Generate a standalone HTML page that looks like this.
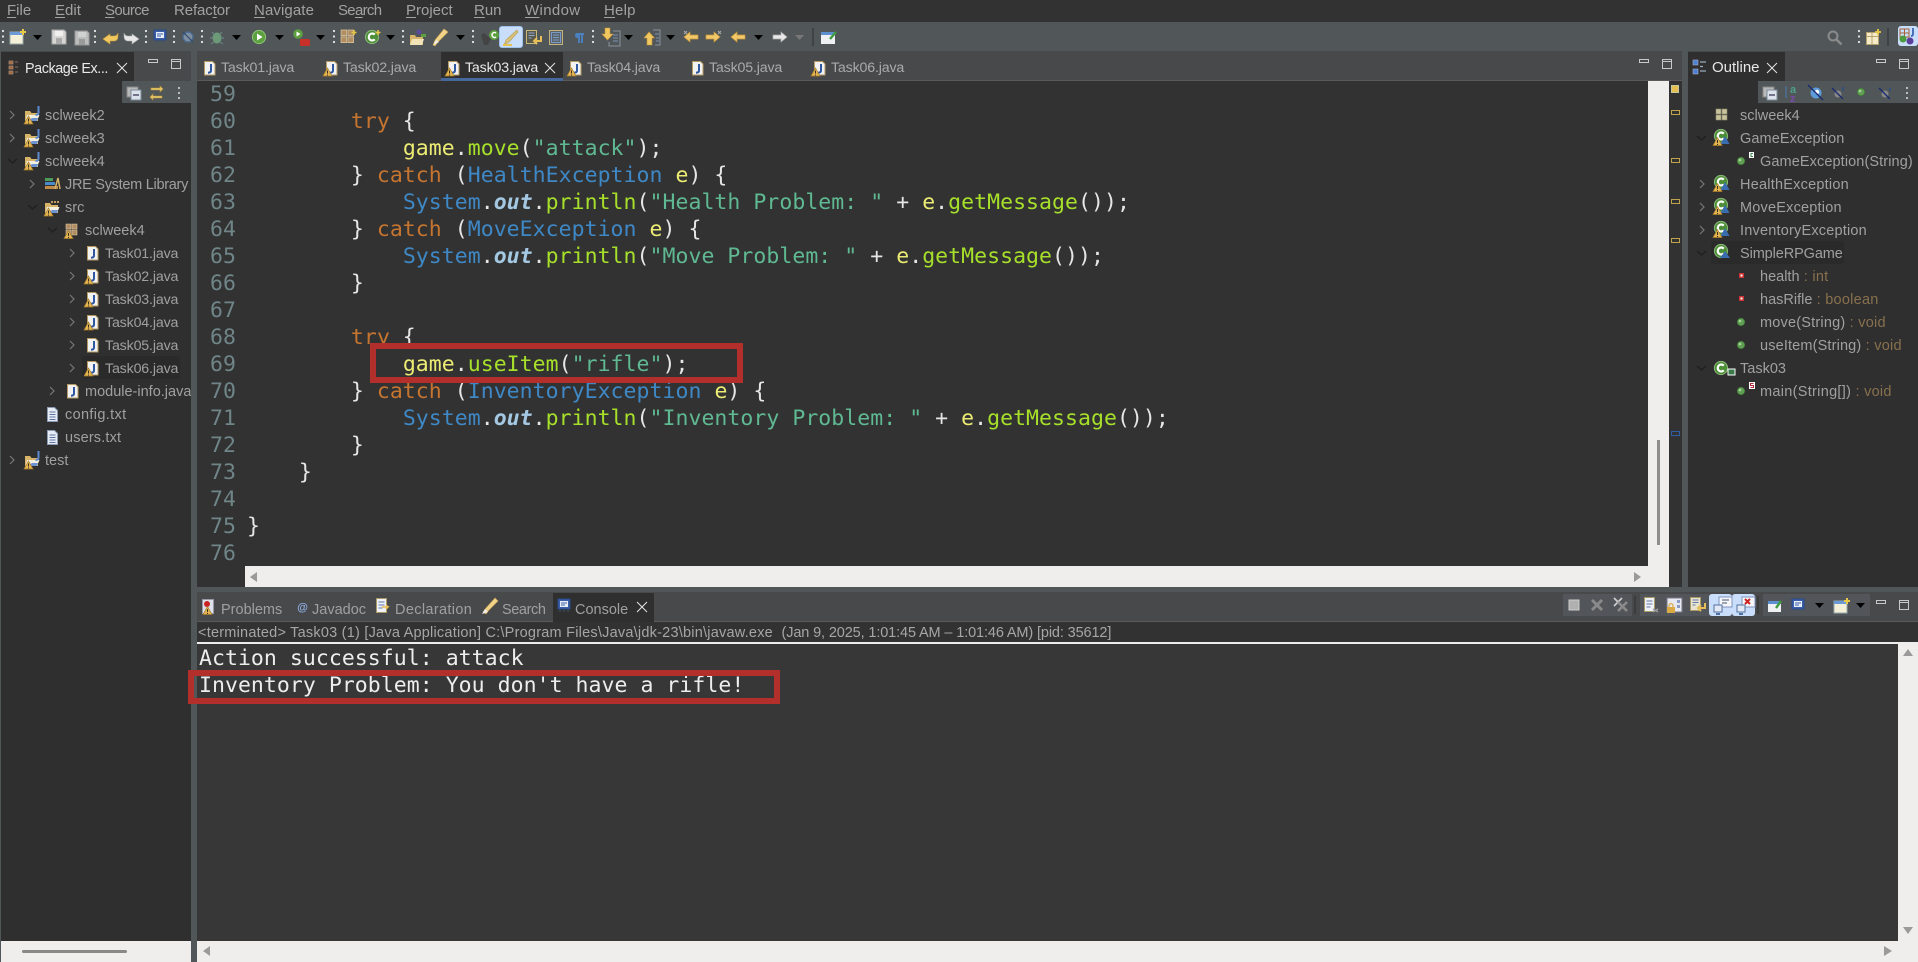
<!DOCTYPE html>
<html><head><meta charset="utf-8"><title>Eclipse</title>
<style>
html,body{margin:0;padding:0;width:1918px;height:962px;overflow:hidden;background:#515658}
body{position:relative;font-family:"Liberation Sans",sans-serif;font-size:14.5px;color:#a0a0a0}
.b{position:absolute}
.t{position:absolute;white-space:pre;line-height:20px;height:20px}
.m{font-size:15px;color:#a2a2a2;top:1px}
.u{text-decoration:underline;text-underline-offset:2px}
.j{font-size:14.2px;letter-spacing:-.15px}
.tab{top:58px;font-size:14.2px;letter-spacing:-.16px;color:#aaa}
.sel{color:#e8e8e8}
.ptab{top:600px;color:#a0a0a0}
.w{position:absolute;left:0;top:1px}
code,pre{font-family:"DejaVu Sans Mono","Liberation Mono",monospace}
pre{position:absolute;margin:0;font-size:21.5px;line-height:27.02px;letter-spacing:.04px;white-space:pre;color:#e6e6e6}
.k{color:#c5752f}.c{color:#3f88c6}.v{color:#ecec74}.f{color:#a7e02a}.s{color:#5fb992}.o{color:#a4c8e2;font-weight:bold;font-style:italic}
.ty{color:#88714e;letter-spacing:.25px}
svg{position:absolute;left:0;top:0}
</style></head><body>
<!-- bars -->
<div class="b" style="left:0;top:0;width:1918px;height:22px;background:#323232"></div>
<div class="b" style="left:0;top:22px;width:1918px;height:29px;background:#515658"></div>
<!-- left panel -->
<div class="b" style="left:1px;top:51px;width:190px;height:30px;background:#48494b"></div>
<div class="b" style="left:1px;top:52px;width:133px;height:29px;background:#2f2f2f"></div>
<div class="b" style="left:1px;top:81px;width:190px;height:860px;background:#2f2f2f"></div>
<div class="b" style="left:122px;top:81px;width:69px;height:22px;background:#515658"></div>
<div class="b" style="left:1px;top:941px;width:190px;height:21px;background:#efeeec"></div>
<div class="b" style="left:22px;top:950px;width:105px;height:3px;background:#888;border-radius:2px"></div>
<div class="b" style="left:82px;top:356px;width:98px;height:23px;background:#2a2a2a;border-radius:3px"></div>
<!-- editor -->
<div class="b" style="left:197px;top:51px;width:1485px;height:30px;background:#48494b"></div>
<div class="b" style="left:197px;top:80px;width:1485px;height:1px;background:#5a5a5a"></div>
<div class="b" style="left:441px;top:52px;width:122px;height:27px;background:#2f2f2f"></div>
<div class="b" style="left:441px;top:78px;width:122px;height:3px;background:#45699c"></div>
<div class="b" style="left:197px;top:81px;width:1485px;height:506px;background:#323232"></div>
<div class="b" style="left:1648px;top:81px;width:21px;height:506px;background:#efeeec"></div>
<div class="b" style="left:245px;top:566px;width:1424px;height:21px;background:#efeeec"></div>
<div class="b" style="left:1657px;top:440px;width:3px;height:105px;background:#8e8e8e"></div>
<div class="b" style="left:1671px;top:85px;width:6px;height:6px;background:#e5c04e;border:1px solid #c8c8a0"></div>
<div class="b" style="left:1671px;top:110px;width:7px;height:3px;border:1px solid #bfa44e"></div>
<div class="b" style="left:1671px;top:158px;width:7px;height:3px;border:1px solid #bfa44e"></div>
<div class="b" style="left:1671px;top:199px;width:7px;height:3px;border:1px solid #bfa44e"></div>
<div class="b" style="left:1671px;top:238px;width:7px;height:3px;border:1px solid #bfa44e"></div>
<div class="b" style="left:1671px;top:431px;width:7px;height:3px;border:1px solid #2f5ea8"></div>
<!-- outline -->
<div class="b" style="left:1688px;top:51px;width:230px;height:30px;background:#48494b"></div>
<div class="b" style="left:1688px;top:52px;width:97px;height:29px;background:#2f2f2f"></div>
<div class="b" style="left:1688px;top:81px;width:230px;height:506px;background:#2f2f2f"></div>
<div class="b" style="left:1758px;top:81px;width:160px;height:22px;background:#515658"></div>
<div class="b" style="left:1711px;top:241px;width:133px;height:23px;background:#2a2a2a;border-radius:3px"></div>
<!-- bottom panel -->
<div class="b" style="left:197px;top:592px;width:1721px;height:30px;background:#48494b"></div>
<div class="b" style="left:197px;top:621px;width:1721px;height:1px;background:#5a5a5a"></div>
<div class="b" style="left:553px;top:593px;width:101px;height:29px;background:#2f2f2f"></div>
<div class="b" style="left:1563px;top:594px;width:69px;height:22px;background:#52565a"></div>
<div class="b" style="left:1640px;top:594px;width:115px;height:22px;background:#52565a"></div>
<div class="b" style="left:1763px;top:594px;width:107px;height:22px;background:#52565a"></div>
<div class="b" style="left:1709px;top:594px;width:23px;height:22px;background:#c9defa;border-radius:3px"></div>
<div class="b" style="left:1732px;top:594px;width:23px;height:22px;background:#c9defa;border-radius:3px"></div>
<div class="b" style="left:197px;top:622px;width:1721px;height:20px;background:#323232"></div>
<div class="b" style="left:197px;top:642px;width:1721px;height:2px;background:#eee"></div>
<div class="b" style="left:197px;top:644px;width:1701px;height:297px;background:#373737"></div>
<div class="b" style="left:1898px;top:644px;width:20px;height:318px;background:#efeeec"></div>
<div class="b" style="left:197px;top:941px;width:1721px;height:21px;background:#efeeec"></div>
<!-- toolbar highlight buttons -->
<div class="b" style="left:499px;top:26px;width:22px;height:20px;background:#c9defa;border:1px solid #9fc2ee;border-radius:3px"></div>
<div class="b" style="left:1898px;top:26px;width:20px;height:20px;background:#c9defa;border-radius:3px"></div>

<!-- menu -->
<div class="t m" style="left:7px"><span class="u">F</span>ile</div>
<div class="t m" style="left:55px"><span class="u">E</span>dit</div>
<div class="t m" style="left:105px;letter-spacing:-.6px"><span class="u">S</span>ource</div>
<div class="t m" style="left:174px;letter-spacing:-.1px">Refac<span class="u">t</span>or</div>
<div class="t m" style="left:254px;letter-spacing:.1px"><span class="u">N</span>avigate</div>
<div class="t m" style="left:338px;letter-spacing:-.7px">Se<span class="u">a</span>rch</div>
<div class="t m" style="left:406px"><span class="u">P</span>roject</div>
<div class="t m" style="left:474px"><span class="u">R</span>un</div>
<div class="t m" style="left:525px;letter-spacing:.35px"><span class="u">W</span>indow</div>
<div class="t m" style="left:604px;letter-spacing:.2px"><span class="u">H</span>elp</div>

<!-- package explorer -->
<div class="t sel" style="left:25px;top:59px;font-size:14.4px;letter-spacing:-.45px">Package Ex...</div>
<div class="w">
<div class="t" style="left:45px;top:105px">sclweek2</div>
<div class="t" style="left:45px;top:128px">sclweek3</div>
<div class="t" style="left:45px;top:151px">sclweek4</div>
<div class="t" style="left:65px;top:174px;letter-spacing:-.28px">JRE System Library</div>
<div class="t" style="left:65px;top:197px">src</div>
<div class="t" style="left:85px;top:220px">sclweek4</div>
<div class="t j" style="left:105px;top:243px">Task01.java</div>
<div class="t j" style="left:105px;top:266px">Task02.java</div>
<div class="t j" style="left:105px;top:289px">Task03.java</div>
<div class="t j" style="left:105px;top:312px">Task04.java</div>
<div class="t j" style="left:105px;top:335px">Task05.java</div>
<div class="t j" style="left:105px;top:358px">Task06.java</div>
<div class="b" style="left:85px;top:381px;width:106px;height:20px;overflow:hidden"><div class="t" style="left:0;top:0">module-info.java</div></div>
<div class="t" style="left:65px;top:404px;letter-spacing:.35px">config.txt</div>
<div class="t" style="left:65px;top:427px;letter-spacing:.15px">users.txt</div>
<div class="t" style="left:45px;top:450px">test</div>
</div>

<!-- editor tabs -->
<div class="t tab" style="left:221px">Task01.java</div>
<div class="t tab" style="left:343px">Task02.java</div>
<div class="t tab sel" style="left:465px">Task03.java</div>
<div class="t tab" style="left:587px">Task04.java</div>
<div class="t tab" style="left:709px">Task05.java</div>
<div class="t tab" style="left:831px">Task06.java</div>

<!-- code -->
<pre style="left:210px;top:81px;color:#6f8588">59
60
61
62
63
64
65
66
67
68
69
70
71
72
73
74
75
76</pre>
<pre style="left:247px;top:81px">

        <span class="k">try</span> {
            <span class="v">game</span>.<span class="f">move</span>(<span class="s">"attack"</span>);
        } <span class="k">catch</span> (<span class="c">HealthException</span> <span class="v">e</span>) {
            <span class="c">System</span>.<span class="o">out</span>.<span class="f">println</span>(<span class="s">"Health Problem: "</span> + <span class="v">e</span>.<span class="f">getMessage</span>());
        } <span class="k">catch</span> (<span class="c">MoveException</span> <span class="v">e</span>) {
            <span class="c">System</span>.<span class="o">out</span>.<span class="f">println</span>(<span class="s">"Move Problem: "</span> + <span class="v">e</span>.<span class="f">getMessage</span>());
        }

        <span class="k">try</span> {
            <span class="v">game</span>.<span class="f">useItem</span>(<span class="s">"rifle"</span>);
        } <span class="k">catch</span> (<span class="c">InventoryException</span> <span class="v">e</span>) {
            <span class="c">System</span>.<span class="o">out</span>.<span class="f">println</span>(<span class="s">"Inventory Problem: "</span> + <span class="v">e</span>.<span class="f">getMessage</span>());
        }
    }

}
</pre>

<!-- outline -->
<div class="t sel" style="left:1712px;top:58px;font-size:15px">Outline</div>
<div class="w">
<div class="t" style="left:1740px;top:105px">sclweek4</div>
<div class="t" style="left:1740px;top:128px;letter-spacing:.1px">GameException</div>
<div class="t" style="left:1760px;top:151px;letter-spacing:.1px">GameException(String)</div>
<div class="t" style="left:1740px;top:174px;letter-spacing:.22px">HealthException</div>
<div class="t" style="left:1740px;top:197px;letter-spacing:.2px">MoveException</div>
<div class="t" style="left:1740px;top:220px;letter-spacing:.2px">InventoryException</div>
<div class="t" style="left:1740px;top:243px;letter-spacing:-.1px">SimpleRPGame</div>
<div class="t" style="left:1760px;top:266px">health<span class="ty"> : int</span></div>
<div class="t" style="left:1760px;top:289px">hasRifle<span class="ty"> : boolean</span></div>
<div class="t" style="left:1760px;top:312px;letter-spacing:.2px">move(String)<span class="ty"> : void</span></div>
<div class="t" style="left:1760px;top:335px;letter-spacing:.15px">useItem(String)<span class="ty"> : void</span></div>
<div class="t" style="top:358px;left:1740px">Task03</div>
<div class="t" style="left:1760px;top:381px;letter-spacing:.3px">main(String[])<span class="ty"> : void</span></div>
</div>

<!-- bottom tabs -->
<div class="t ptab" style="left:221px">Problems</div>
<div class="t ptab" style="left:312px">Javadoc</div>
<div class="t ptab" style="left:395px;letter-spacing:.35px">Declaration</div>
<div class="t ptab" style="left:502px;letter-spacing:-.4px">Search</div>
<div class="t ptab sel" style="left:575px">Console</div>
<div class="t" style="left:198px;top:623px;font-size:14.5px;letter-spacing:.225px;color:#a6a6a6">&lt;terminated&gt; Task03 (1) [Java Application] C:\Program Files\Java\jdk-23\bin\javaw.exe  <span style="letter-spacing:-.125px">(Jan 9, 2025, 1:01:45 AM – 1:01:46 AM) [pid: 35612]</span></div>
<pre style="left:199px;top:645px;color:#ededed">Action successful: attack
Inventory Problem: You don't have a rifle!</pre>

<!-- icons -->
<svg width="1918" height="962" viewBox="0 0 1918 962">
<defs>
<g id="warn"><path d="M4.5 .5L9 8.5H0Z" fill="#e3b552" stroke="#a67c2a" stroke-width=".7"/><path d="M4.5 3v3M4.5 7v1" stroke="#3a3020" stroke-width="1"/></g>
<g id="fold"><path d="M1 5h5l1.5 2H14v8H1z" fill="#d8b468"/><path d="M3 9h12.5l-2.5 6H1.5z" fill="#f3efe0"/><path d="M8 12h6l-1 3H4z" fill="#6c93d2"/></g>
<g id="prj"><use href="#fold"/><path d="M14.5 0v6.5q0 2.5-3 2.5" stroke="#5e8ad0" stroke-width="2" fill="none"/><use href="#warn" x="0" y="9.5"/></g>
<g id="prj0"><use href="#fold"/><use href="#warn" x="0" y="9.5"/><path d="M7 3h2v2H7zM10 3h2v2h-2zM13 3h2v2h-2z" fill="#c09a60"/></g>
<g id="jf"><path d="M.5.5h8l2.5 2.5v11H.5z" fill="#f2f2f2" stroke="#b49a62"/><path d="M7 3v6.5q0 2.2-3 2.2" stroke="#2f56a0" stroke-width="2" fill="none"/></g>
<g id="jw"><use href="#jf" x="3"/><use href="#warn" y="6.5"/></g>
<g id="pkg"><path d="M0 0h5v5H0zM6 0h5v5H6zM0 6h5v5H0zM6 6h5v5H6z" fill="#b08d62" stroke="#e0c8a0" stroke-width=".6"/></g>
<g id="txt"><path d="M.5.5h7l3 3v11H.5z" fill="#e6ecf6" stroke="#8c9ab4"/><path d="M2.5 5h6M2.5 7.5h6M2.5 10h6M2.5 12.5h6" stroke="#6072a0"/></g>
<g id="cl"><circle cx="7" cy="7" r="6.6" fill="#4d8f38" stroke="#8ab67a"/><path d="M9.8 4.6A3.5 3.5 0 1 0 9.8 9.4" stroke="#fff" stroke-width="2.2" fill="none"/></g>
<g id="clw"><use href="#cl" x="1"/><path d="M12 7l4.500 8H7.500z" fill="#3a6cb0"/><use href="#warn" x="0" y="8"/></g>
<g id="dot"><circle cx="4" cy="4" r="3.8" fill="#5f9f52" stroke="#3c6e36" stroke-width=".6"/><circle cx="3" cy="3" r="1.300" fill="#a9d49a"/></g>
<g id="sq"><rect width="5" height="5" fill="#c33"/><rect x="1.500" y="1.500" width="2" height="2" fill="#fff"/></g>
<g id="nw"><rect x="1" y="3" width="13" height="12" fill="#f5f0d8" stroke="#9aa" /><rect x="1" y="3" width="13" height="3" fill="#6d9bd8"/><path d="M14 0v6M11 3h6" stroke="#e8c848" stroke-width="2"/></g>
<g id="sv"><path d="M1 1h12l2 2v12H1z" fill="#d6d6d4" stroke="#aaa"/><rect x="4" y="2" width="8" height="5" fill="#f0f0f0"/><rect x="5" y="9" width="6" height="6" fill="#aaa"/></g>
<g id="ba"><path d="M8 5L1 10l7 5v-3h4q4 0 4-5V4q-1 3-4 3H8z" fill="#f0c860" stroke="#c79b3e" stroke-width=".6"/></g>
<g id="la"><path d="M6 2L0 7l6 5V9h8V5H6z" fill="#f3c868" stroke="#c6983e" stroke-width=".7"/></g>
<g id="ra"><path d="M8 2l6 5-6 5V9H0V5h8z" fill="#f3c868" stroke="#c6983e" stroke-width=".7"/></g>
<g id="cr"><path d="M0 0h9l-4.500 5z" fill="#000"/></g>
<g id="gr"><circle cx="1" cy="1" r="1" fill="#ddd"/><circle cx="1" cy="6" r="1" fill="#ddd"/><circle cx="1" cy="11" r="1" fill="#ddd"/></g>
<g id="hd"><circle cx="1" cy="1" r="1.100" fill="#e8e8e8"/><circle cx="1" cy="6.500" r="1.100" fill="#e8e8e8"/><circle cx="1" cy="12" r="1.100" fill="#e8e8e8"/></g>
<g id="mn"><rect x=".5" y=".5" width="9" height="3" fill="none" stroke="#c8c8c8"/></g>
<g id="mx"><rect x=".5" y=".5" width="9" height="9" fill="none" stroke="#c8c8c8"/><path d="M0 2.500h10" stroke="#c8c8c8"/></g>
<g id="xx"><path d="M0 0l10 10M10 0L0 10" stroke="#e6e6e6" stroke-width="1"/></g>
<g id="ch"><path d="M0 0l4 4-4 4" stroke="#777" stroke-width="1.200" fill="none"/></g>
<g id="dn"><path d="M0 0l4.500 4 4.500-4" stroke="#1f1f1f" stroke-width="1.300" fill="none"/></g>
<g id="mon"><rect x="0" y="0" width="12" height="10" fill="#3a5fa8" stroke="#2a4a88"/><rect x="2" y="2" width="8" height="6" fill="#e8eef8"/><path d="M3 4h6M3 6h4" stroke="#3a5fa8"/><path d="M1 12h2M5 12h2M9 12h2" stroke="#456"/></g>
<g id="con2"><rect x="6" y="0" width="13" height="10" fill="#f4f6fb" stroke="#7f94bd"/><rect x="1" y="8" width="8" height="7" fill="#e4eaf5" stroke="#4e6f9f"/><path d="M3 17h4" stroke="#4e6f9f" stroke-width="2"/></g>
<g id="doc"><path d="M.5.5h10v14H.5z" fill="#eef1f8" stroke="#a99a66"/><path d="M2.500 4h6M2.500 7h6M2.500 10h4" stroke="#6278a8"/></g>
</defs>

<!-- main toolbar -->
<use href="#hd" x="2" y="30"/>
<use href="#nw" x="9" y="29"/><use href="#cr" x="33" y="35"/>
<use href="#sv" x="51" y="29"/><g opacity=".8"><use href="#sv" x="74" y="30"/></g>
<use href="#hd" x="94" y="30"/>
<use href="#ba" x="102" y="29"/><g transform="translate(140,29) scale(-1,1)"><path d="M8 5L1 10l7 5v-3h4q4 0 4-5V4q-1 3-4 3H8z" fill="#e6e6e6" stroke="#aaa" stroke-width=".6"/></g>
<use href="#hd" x="145" y="30"/>
<use href="#mon" x="154" y="30"/>
<use href="#hd" x="173" y="30"/>
<g transform="translate(182,31)"><circle cx="6" cy="6" r="5" fill="#7f8f9f" stroke="#4a6a90" stroke-width="1.400"/><path d="M1 1l10 10" stroke="#2f4a70" stroke-width="1.200"/></g>
<use href="#hd" x="201" y="30"/>
<g transform="translate(210,29)"><ellipse cx="7" cy="9" rx="4.500" ry="5.500" fill="#6c9a78"/><path d="M2 3l3 3M12 3l-3 3M0 9h3M11 9h3M1 15l3-2M13 15l-3-2" stroke="#6a8a8a"/></g><use href="#cr" x="232" y="35"/>
<g transform="translate(252,30)"><circle cx="7" cy="7" r="6.600" fill="#5da03f" stroke="#8fc47a"/><path d="M5 3.500l5.500 3.500L5 10.500z" fill="#fff"/></g><use href="#cr" x="275" y="35"/>
<g transform="translate(293,29)"><circle cx="5" cy="5" r="4.800" fill="#5da03f"/><path d="M3.500 2.500l4 2.500-4 2.500z" fill="#fff"/><rect x="7" y="10" width="10" height="7" fill="#c8302a" rx="1"/></g><use href="#cr" x="316" y="35"/>
<use href="#hd" x="333" y="30"/>
<g transform="translate(341,30)"><g transform="scale(1.150)"><use href="#pkg"/></g><path d="M13 0v5M10.500 2.500h5" stroke="#e8c848" stroke-width="1.600"/></g>
<g transform="translate(365,30)"><use href="#cl"/><path d="M13 0v5M10.500 2.500h5" stroke="#e8c848" stroke-width="1.600"/></g><use href="#cr" x="386" y="35"/>
<use href="#hd" x="402" y="30"/>
<g transform="translate(409,29)"><path d="M1 6h5l1 2h7v8H1z" fill="#d8b468"/><path d="M3 10h12l-2 6H1z" fill="#f0e3b8"/><circle cx="10" cy="3" r="2.500" fill="#5a4a9a"/><rect x="12" y="5" width="5" height="3" fill="#5da03f"/></g>
<g transform="translate(432,29)"><path d="M12 0l4 3-9 9-4 5-2-1 2-5z" fill="#f2d38c" stroke="#c7a64e" stroke-width=".6"/><path d="M1 16l3-5 3 2z" fill="#eee"/></g><use href="#cr" x="456" y="35"/>
<use href="#hd" x="472" y="30"/>
<g transform="translate(481,29)"><path d="M0 6l3-2 7 6-3 6H3z" fill="#444"/><circle cx="13" cy="6" r="5" fill="#5da03f"/><path d="M15 4a2.500 2.500 0 1 0 0 4" stroke="#fff" fill="none" stroke-width="1.500"/></g>
<g transform="translate(502,29)"><path d="M15 1l1 2-9 10-5 3 2-5z" fill="#d9c27a" stroke="#b49a50" stroke-width=".6"/><path d="M1 16h9" stroke="#e5c34e" stroke-width="2"/></g>
<g transform="translate(526,30)"><path d="M.5 .5h10v13H.5z" fill="#5a5a4a" stroke="#c9ba7a"/><path d="M2.500 3h6M2.500 5.500h6M2.500 8h3" stroke="#8ea6d0"/><path d="M15 6v5H8m3-3l-3 3 3 3" stroke="#e7be58" stroke-width="2" fill="none"/></g>
<g transform="translate(549,30)"><rect x=".5" y=".5" width="13" height="14" fill="#5a6468" stroke="#c7b47a"/><rect x="2.500" y="2.500" width="9" height="10" fill="none" stroke="#7a9ac8"/><path d="M4 5h6M4 7.500h6M4 10h6" stroke="#7a9ac8"/></g>
<path d="M577 33h7v2h-1v8h-2v-8h-1v8h-2v-5q-3 0-3-2.500t2-2.500z" fill="#4a80c0"/>
<use href="#hd" x="592" y="30"/>
<g transform="translate(601,28)"><path d="M4 0h5v6h3l-5.500 6L1 6h3z" fill="#f1c860" stroke="#c2953c" stroke-width=".6"/><path d="M12 3h7v15H8v-4" fill="none" stroke="#8b93a0"/><path d="M12 7h5M12 10h5M12 13h5" stroke="#7a93b8"/></g><use href="#cr" x="624" y="35"/>
<g transform="translate(643,28)"><path d="M6 4l5.500 6H9v7H4v-7H1z" fill="#f1c860" stroke="#c2953c" stroke-width=".6"/><path d="M10 2h7v15h-5" fill="none" stroke="#8b93a0"/><path d="M12 6h4M13 10h3M13 13h3" stroke="#7a93b8"/></g><use href="#cr" x="666" y="35"/>
<g transform="translate(684,30)"><use href="#la"/><path d="M0 1l3 3M3 1L0 4" stroke="#aaa"/></g>
<g transform="translate(706,30)"><use href="#ra"/><path d="M12 1l3 3M15 1l-3 3" stroke="#aaa"/></g>
<use href="#la" x="731" y="30"/><use href="#cr" x="754" y="35"/>
<g transform="translate(773,30)"><path d="M8 2l6 5-6 5V9H0V5h8z" fill="#e8e8e8" stroke="#aaa" stroke-width=".7"/></g>
<path d="M795 35h9l-4.500 5z" fill="#777"/>
<path d="M813 28v18" stroke="#2e2e2e" stroke-width="1"/>
<g transform="translate(821,30)"><rect x="0" y="2" width="14" height="12" fill="#eef0f4"/><rect x="0" y="2" width="14" height="3" fill="#5c8fd0"/><path d="M9 9l6-7" stroke="#3d9a3d" stroke-width="2.400"/></g>
<g transform="translate(1827,30)"><circle cx="6" cy="6" r="4.500" fill="none" stroke="#8b8b8b" stroke-width="2"/><path d="M9.500 9.500l5 5" stroke="#8b8b8b" stroke-width="2.400"/></g>
<use href="#hd" x="1858" y="30"/>
<g transform="translate(1866,29)"><rect x=".5" y="3.500" width="12" height="12" fill="#f6ecc8" stroke="#b5a070"/><path d="M.5 7.500h12M6 3.500v12" stroke="#b5a070"/><path d="M12 0v6M9 3h6" stroke="#e8c848" stroke-width="1.800"/></g>
<path d="M1888 28v18" stroke="#2e2e2e"/>
<g transform="translate(1899,28)"><path d="M1 1h9v8H1zM1 5h9M5.500 1v8" fill="none" stroke="#a5603a"/><path d="M14 0v6q0 2-2 2" stroke="#3a66b4" stroke-width="1.800" fill="none"/><circle cx="4" cy="11" r="3.500" fill="#4c9c3f"/><circle cx="11" cy="13" r="3.500" fill="#5b3e9c"/></g>

<!-- view controls -->
<use href="#mn" x="148" y="59"/><use href="#mx" x="171" y="59"/>
<use href="#mn" x="1639" y="59"/><use href="#mx" x="1662" y="59"/>
<use href="#mn" x="1876" y="59"/><use href="#mx" x="1899" y="59"/>
<use href="#mn" x="1876" y="600"/><use href="#mx" x="1899" y="600"/>
<use href="#xx" x="117" y="63"/><use href="#xx" x="545" y="63"/><use href="#xx" x="1767" y="63"/><use href="#xx" x="637" y="602"/>

<!-- package explorer tab icon + toolbar -->
<path d="M9 61h4v3H9zM9 66h4v3H9zM9 71h4v3H9zM15 62h3M15 67h3M15 72h3" fill="#a06a3a" stroke="#a87" stroke-width=".7"/>
<path d="M127 87h11v10h-11z" fill="#b8b8b8" stroke="#888"/><rect x="131" y="90" width="10" height="10" fill="#dce2ec" stroke="#7a8a9a"/><path d="M133 95h6" stroke="#446" stroke-width="1.400"/>
<path d="M151 88h9v-2l3 3-3 3v-2h-9zM162 96h-9v-2l-3 3 3 3v-2h9z" fill="#e9c668" stroke="#b89440" stroke-width=".6"/>
<use href="#gr" x="178" y="87"/>

<!-- explorer tree -->
<use href="#ch" x="10" y="111"/><use href="#prj" x="24" y="106"/>
<use href="#ch" x="10" y="134"/><use href="#prj" x="24" y="129"/>
<g transform="translate(8 159)"><use href="#dn"/></g><use href="#prj" x="24" y="152"/>
<use href="#ch" x="30" y="180"/>
<g transform="translate(45,177)"><rect y="9" width="13" height="3" fill="#c08a4a"/><rect y="5" width="10" height="3" fill="#4a8ac8"/><rect y="1" width="8" height="3" fill="#4d9c5a"/><path d="M10 12l3-11 2 11" stroke="#d8b468" stroke-width="1.500" fill="none"/></g>
<g transform="translate(28 205)"><use href="#dn"/></g><use href="#prj0" x="44" y="198"/>
<g transform="translate(48 228)"><use href="#dn"/></g><g transform="translate(66,224)"><use href="#pkg"/></g><use href="#warn" x="64" y="230"/>
<use href="#ch" x="70" y="249"/><use href="#jf" x="87" y="246"/>
<use href="#ch" x="70" y="272"/><use href="#jw" x="84" y="269"/>
<use href="#ch" x="70" y="295"/><use href="#jw" x="84" y="292"/>
<use href="#ch" x="70" y="318"/><use href="#jw" x="84" y="315"/>
<use href="#ch" x="70" y="341"/><use href="#jf" x="87" y="338"/>
<use href="#ch" x="70" y="364"/><use href="#jw" x="84" y="361"/>
<use href="#ch" x="50" y="387"/><use href="#jf" x="67" y="384"/>
<use href="#txt" x="47" y="407"/>
<use href="#txt" x="47" y="430"/>
<use href="#ch" x="10" y="456"/><use href="#prj" x="24" y="451"/>

<!-- editor tabs -->
<use href="#jf" x="204" y="61"/>
<use href="#jw" x="323" y="61"/>
<use href="#jw" x="445" y="61"/>
<use href="#jw" x="567" y="61"/>
<use href="#jf" x="692" y="61"/>
<use href="#jw" x="811" y="61"/>

<!-- scroll arrows -->
<path d="M257 572v10l-7-5z" fill="#9a9a9a"/>
<path d="M1634 572v10l7-5z" fill="#9a9a9a"/>
<path d="M210 946v10l-7-5z" fill="#9a9a9a"/>
<path d="M1884 946v10l8-5z" fill="#9a9a9a"/>
<path d="M1903 656h10l-5-7z" fill="#9a9a9a"/>
<path d="M1903 927h10l-5 7z" fill="#9a9a9a"/>

<!-- outline icons -->
<g transform="translate(1693,60)"><rect width="5" height="5" fill="#4c80d0" stroke="#aac" stroke-width=".6"/><rect y="9" width="5" height="5" fill="#4c80d0" stroke="#aac" stroke-width=".6"/><path d="M7 2h6M7 6.500h3M7 11h6" stroke="#9ab" stroke-width="1.200"/></g>
<g transform="translate(1763,87)"><rect width="11" height="10" fill="#b8b8b8" stroke="#888"/><rect x="4" y="3" width="10" height="10" fill="#dce2ec" stroke="#7a8a9a"/><path d="M6 8h6" stroke="#446" stroke-width="1.400"/></g>
<path d="M1786 86v12" stroke="#4a7cb4"/><text x="1790" y="93" font-size="11" font-weight="bold" fill="#4fa08a" font-family="Liberation Sans">a</text><text x="1790" y="102" font-size="11" font-weight="bold" fill="#7a4aa8" font-family="Liberation Sans">z</text>
<g transform="translate(1810,87)"><circle cx="6" cy="6" r="5.500" fill="#5d9cd8"/><circle cx="7" cy="5" r="2.200" fill="#fff"/><path d="M-2 -2l15 15" stroke="#1a2a70" stroke-width="1.300"/></g>
<g transform="translate(1833,88)"><circle cx="5" cy="6" r="3.500" fill="#888"/><path d="M-1 0l11 11" stroke="#1a2a70" stroke-width="1.300"/><path d="M10 -1v4" stroke="#36507c" stroke-width="2"/></g>
<use href="#dot" x="1857" y="88"/>
<g transform="translate(1880,88)"><circle cx="5" cy="6" r="3.500" fill="#888"/><path d="M-1 0l11 11" stroke="#1a2a70" stroke-width="1.300"/><path d="M10 0v3" stroke="#36507c" stroke-width="2"/></g>
<use href="#gr" x="1906" y="87"/>

<g transform="translate(1716,109)"><rect width="5" height="5" fill="#c9c29a" stroke="#8a8a70" stroke-width=".6"/><rect x="6" width="5" height="5" fill="#c9c29a" stroke="#8a8a70" stroke-width=".6"/><rect y="6" width="5" height="5" fill="#c9c29a" stroke="#8a8a70" stroke-width=".6"/><rect x="6" y="6" width="5" height="5" fill="#c9c29a" stroke="#8a8a70" stroke-width=".6"/></g>
<g transform="translate(1697 136)"><use href="#dn"/></g><use href="#clw" x="1713" y="129"/>
<use href="#dot" x="1737" y="157"/><rect x="1749" y="152" width="5" height="6" fill="#fff"/><path d="M1753 153.500h-2v3h2" stroke="#3a8a4a" fill="none"/>
<use href="#ch" x="1700" y="180"/><use href="#clw" x="1713" y="175"/>
<use href="#ch" x="1700" y="203"/><use href="#clw" x="1713" y="198"/>
<use href="#ch" x="1700" y="226"/><use href="#clw" x="1713" y="221"/>
<g transform="translate(1697 251)"><use href="#dn"/></g><use href="#cl" x="1714" y="244"/><path d="M1725 251l5 7h-10z" fill="#3a6cb0"/>
<use href="#sq" x="1739" y="273"/>
<use href="#sq" x="1739" y="296"/>
<use href="#dot" x="1737" y="318"/>
<use href="#dot" x="1737" y="341"/>
<g transform="translate(1697 366)"><use href="#dn"/></g><use href="#cl" x="1714" y="361"/><rect x="1728" y="369" width="7" height="6" fill="#3a7a4a" stroke="#fff"/>
<use href="#dot" x="1737" y="387"/><rect x="1749" y="382" width="6" height="7" fill="#fff"/><path d="M1753.500 383.500h-3v2h3v2h-3" stroke="#b02a3a" fill="none"/>

<!-- bottom tab icons -->
<g transform="translate(202,599)"><path d="M.5.500h11v14H.5z" fill="#dde2ea" stroke="#99a"/><circle cx="5" cy="5" r="3" fill="#c22"/><use href="#warn" x="1" y="7"/></g>
<text x="297" y="611" font-size="11" font-weight="bold" font-style="italic" fill="#8fb2e8" font-family="Liberation Sans">@</text>
<g transform="translate(376,598)"><use href="#doc"/><path d="M6 9h6l-2 2m2-2l-2-2" stroke="#e7be58" stroke-width="1.500" fill="none"/></g>
<g transform="translate(482,598)"><path d="M13 0l3 3-9 9-3 4-3-2 3-4z" fill="#f2d38c" stroke="#c7a64e" stroke-width=".6"/><path d="M0 16l3-5 3 3z" fill="#eee"/></g>
<use href="#mon" x="558" y="599"/>

<!-- console toolbar -->
<rect x="1569" y="600" width="10" height="10" fill="#b0b0b0" stroke="#ccc"/>
<path d="M1592 600l10 10M1602 600l-10 10" stroke="#8a8a8a" stroke-width="3"/>
<path d="M1614 598l8 8M1622 598l-8 8" stroke="#cfcfcf" stroke-width="1.600"/><path d="M1618 602l9 9M1627 602l-9 9" stroke="#8a8a8a" stroke-width="2.600"/>
<path d="M1635 596v18" stroke="#2e2e2e"/>
<g transform="translate(1644,597)"><use href="#doc"/><path d="M9 12l5 3M14 12l-5 3" stroke="#999" stroke-width="1.500"/></g>
<g transform="translate(1667,598)"><rect x="0" y="0" width="15" height="14" fill="#e8e8f0" stroke="#778"/><rect x="10" y="2" width="3" height="3" fill="#8a9ac0"/><rect x="10" y="7" width="3" height="3" fill="#8a9ac0"/><rect x="0" y="9" width="8" height="6" fill="#d9a944"/><path d="M2 9V7q2-3 4 0v2" stroke="#d9a944" fill="none" stroke-width="1.200"/></g>
<g transform="translate(1690,597)"><path d="M.5 .5h10v13H.5z" fill="#e8e4cf" stroke="#a99a66"/><path d="M2.500 3h6M2.500 5.500h6M2.500 8h3" stroke="#6278a8"/><path d="M15 6v5H8m3-3l-3 3 3 3" stroke="#e7be58" stroke-width="2" fill="none"/></g>
<use href="#con2" x="1713" y="597"/><path d="M1722 600h7M1722 603h5" stroke="#456"/>
<use href="#con2" x="1736" y="597"/><path d="M1745 599l5 5M1750 599l-5 5" stroke="#c22" stroke-width="2"/>
<path d="M1758 596v18" stroke="#2e2e2e"/>
<g transform="translate(1768,599)"><rect y="2" width="13" height="11" fill="#eef0f4"/><rect y="2" width="13" height="3" fill="#5c8fd0"/><path d="M8 9l5-7" stroke="#3d9a3d" stroke-width="2.400"/></g>
<use href="#mon" x="1792" y="599"/>
<use href="#cr" x="1815" y="603"/>
<use href="#nw" x="1833" y="598"/>
<use href="#cr" x="1856" y="603"/>
</svg>

<!-- red annotation boxes -->
<div class="b" style="left:370px;top:343px;width:373px;height:40px;box-sizing:border-box;border:6px solid #b22f2c"></div>
<div class="b" style="left:188px;top:670px;width:592px;height:34px;box-sizing:border-box;border:6px solid #b22f2c"></div>
</body></html>
